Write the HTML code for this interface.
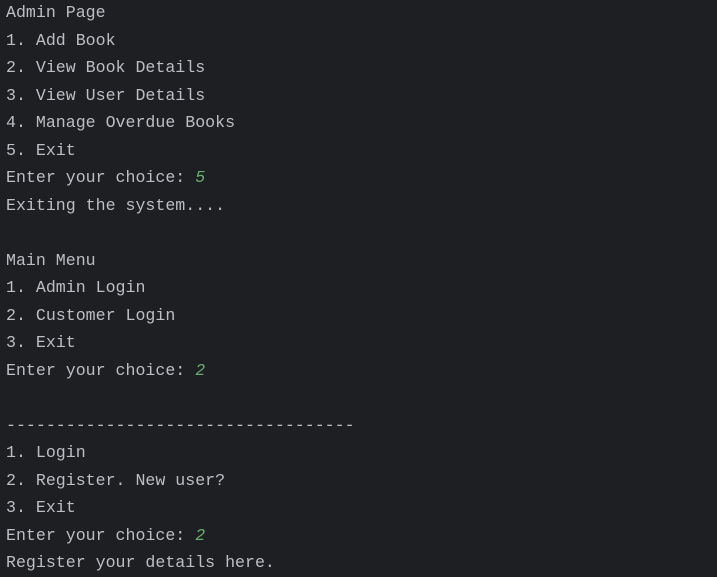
<!DOCTYPE html>
<html><head><style>
html,body{margin:0;padding:0;background:#1e1f22;width:717px;height:577px;overflow:hidden}
pre{margin:0;padding:0 0 0 6px;position:relative;top:-1px;font-family:"Liberation Mono",monospace;font-size:16.6px;line-height:27.5px;color:#bcbec4}
i{color:#6aab73;font-style:italic}
</style></head><body><pre>Admin Page
1. Add Book
2. View Book Details
3. View User Details
4. Manage Overdue Books
5. Exit
Enter your choice: <i>5</i>
Exiting the system....

Main Menu
1. Admin Login
2. Customer Login
3. Exit
Enter your choice: <i>2</i>

-----------------------------------
1. Login
2. Register. New user?
3. Exit
Enter your choice: <i>2</i>
Register your details here.</pre></body></html>
